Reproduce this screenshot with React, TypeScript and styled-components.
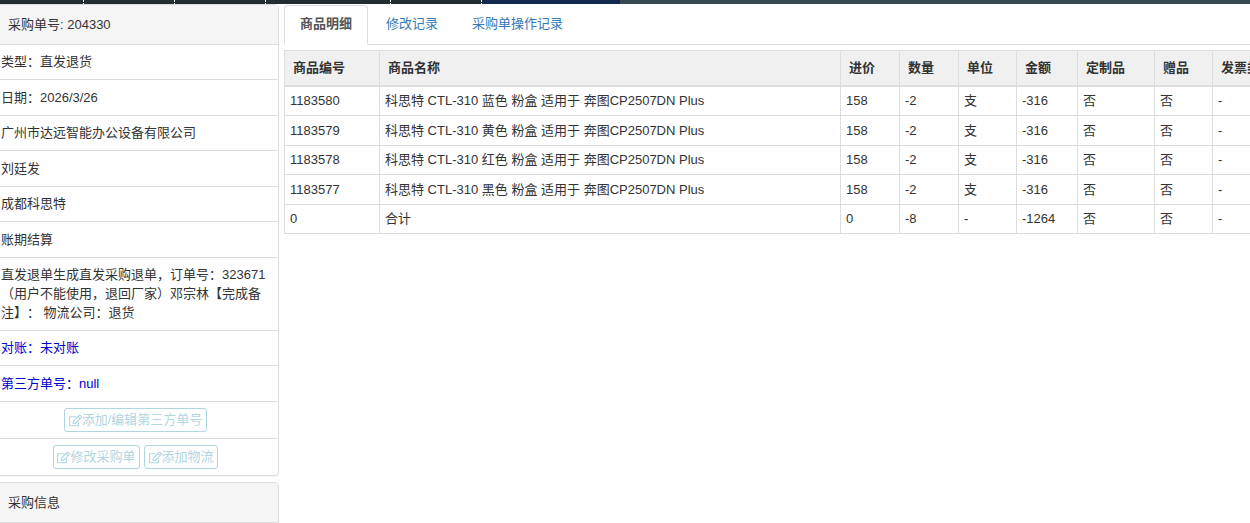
import React from 'react';
import styled, { createGlobalStyle } from 'styled-components';
import { FaRegEdit } from 'react-icons/fa';

const GlobalStyle = createGlobalStyle`
  html, body {
    margin: 0;
    padding: 0;
    height: 523px;
    overflow: hidden;
    background: #fff;
    font-family: "Liberation Sans", "Noto Sans CJK SC", sans-serif;
    font-size: 13px;
    line-height: 1.42857;
    color: #333;
    text-spacing-trim: space-all;
  }
`;

const TopBar = styled.div`
  display: flex;
  height: 4px;
  background: #374850;
`;
const BarPart = styled.div<{ $w: number; $bg: string }>`
  width: ${(p) => p.$w}px;
  background: ${(p) => p.$bg};
  border-right: 1px dotted #fff;
  box-sizing: border-box;
`;
const NavyPart = styled.div`
  width: 138px;
  background: #12294f;
`;

const Page = styled.div`
  display: flex;
  align-items: flex-start;
  margin-left: -8px;
`;

const Side = styled.div`
  width: 287px;
  flex: none;
`;
const Panel = styled.div`
  background: #fff;
  border: 1px solid #ddd;
  border-radius: 4px;
  box-shadow: 0 1px 1px rgba(0, 0, 0, 0.05);
  margin-bottom: 6px;
`;
const PanelHeading = styled.div`
  background: #f5f5f5;
  border-bottom: 1px solid #ddd;
  height: 38.5px;
  line-height: 39px;
  padding-left: 15px;
`;
const PanelBody = styled.div`
  height: 120px;
`;
const Row = styled.div<{ $blue?: boolean }>`
  padding: 8.5px 8px 7.5px;
  border-bottom: 1px solid #ddd;
  color: ${(p) => (p.$blue ? '#0000cd' : '#333')};
`;
const ButtonRow = styled.div`
  height: 37px;
  box-sizing: border-box;
  display: flex;
  justify-content: center;
  align-items: center;
  gap: 4px;
  border-bottom: 1px solid #ddd;
  &:last-child {
    height: 36.5px;
    border-bottom: 0;
  }
`;
const OutlineButton = styled.button`
  height: 24px;
  padding: 1px 3.5px 0;
  display: inline-flex;
  align-items: center;
  font: inherit;
  color: #6fb5c9;
  background: #fff;
  border: 1px solid #6fb5c9;
  border-radius: 3px;
  opacity: 0.55;
  svg {
    width: 13px;
    height: 13px;
    flex: none;
  }
`;

const Main = styled.div`
  flex: none;
  width: 1000px;
  margin-left: 5px;
  padding-top: 1px;
`;
const Tabs = styled.div`
  display: flex;
  height: 39px;
  border-bottom: 1px solid #ddd;
`;
const Tab = styled.div<{ $active?: boolean }>`
  box-sizing: border-box;
  padding: 0 15px;
  line-height: 36px;
  margin-right: 2px;
  color: ${(p) => (p.$active ? '#555' : '#337ab7')};
  font-weight: ${(p) => (p.$active ? 'bold' : 'normal')};
  background: #fff;
  border: 1px solid ${(p) => (p.$active ? '#ddd' : 'transparent')};
  border-bottom-color: ${(p) => (p.$active ? '#fff' : 'transparent')};
  border-radius: 4px 4px 0 0;
  height: ${(p) => (p.$active ? 40 : 39)}px;
`;
const GoodsTable = styled.table`
  margin-top: 5px;
  border-collapse: collapse;
  table-layout: fixed;
  width: 1020px;
`;
const HeadCell = styled.th`
  padding: 8px 8px 7px;
  text-align: left;
  font-weight: bold;
  background: #f0f0f0;
  border: 1px solid #ddd;
  border-bottom-width: 2px;
  white-space: nowrap;
  overflow: hidden;
`;
const Cell = styled.td`
  padding: 5.4px 5px 4.6px;
  border: 1px solid #ddd;
  white-space: nowrap;
`;

const columns: [string, number][] = [
  ['商品编号', 95],
  ['商品名称', 461],
  ['进价', 59],
  ['数量', 59],
  ['单位', 58],
  ['金额', 61],
  ['定制品', 77],
  ['赠品', 58],
  ['发票类型', 92],
];

const goods: string[][] = [
  ['1183580', '科思特 CTL-310 蓝色 粉盒 适用于 奔图CP2507DN Plus', '158', '-2', '支', '-316', '否', '否', '-'],
  ['1183579', '科思特 CTL-310 黄色 粉盒 适用于 奔图CP2507DN Plus', '158', '-2', '支', '-316', '否', '否', '-'],
  ['1183578', '科思特 CTL-310 红色 粉盒 适用于 奔图CP2507DN Plus', '158', '-2', '支', '-316', '否', '否', '-'],
  ['1183577', '科思特 CTL-310 黑色 粉盒 适用于 奔图CP2507DN Plus', '158', '-2', '支', '-316', '否', '否', '-'],
  ['0', '合计', '0', '-8', '-', '-1264', '否', '否', '-'],
];

const App = () => {
  return (
    <>
      <GlobalStyle />
      <TopBar>
        <BarPart $w={84} $bg="#222d32" />
        <BarPart $w={91} $bg="#222d32" />
        <BarPart $w={91} $bg="#222d32" />
        <BarPart $w={125} $bg="#222d32" />
        <BarPart $w={91} $bg="#222d32" />
        <NavyPart />
      </TopBar>
      <Page>
        <Side>
          <Panel>
            <PanelHeading>采购单号: 204330</PanelHeading>
            <Row>类型：直发退货</Row>
            <Row>日期：2026/3/26</Row>
            <Row>广州市达远智能办公设备有限公司</Row>
            <Row>刘廷发</Row>
            <Row>成都科思特</Row>
            <Row>账期结算</Row>
            <Row>
              直发退单生成直发采购退单，订单号：323671（用户不能使用，退回厂家）邓宗林【完成备注】： 物流公司：退货
            </Row>
            <Row $blue>对账：未对账</Row>
            <Row $blue>第三方单号：null</Row>
            <ButtonRow>
              <OutlineButton><FaRegEdit />添加/编辑第三方单号</OutlineButton>
            </ButtonRow>
            <ButtonRow>
              <OutlineButton><FaRegEdit />修改采购单</OutlineButton>
              <OutlineButton><FaRegEdit />添加物流</OutlineButton>
            </ButtonRow>
          </Panel>
          <Panel>
            <PanelHeading>采购信息</PanelHeading>
            <PanelBody />
          </Panel>
        </Side>
        <Main>
          <Tabs>
            <Tab $active>商品明细</Tab>
            <Tab>修改记录</Tab>
            <Tab>采购单操作记录</Tab>
          </Tabs>
          <GoodsTable>
            <colgroup>
              {columns.map(([name, width]) => (
                <col key={name} width={width} />
              ))}
            </colgroup>
            <thead>
              <tr>
                {columns.map(([name]) => (
                  <HeadCell key={name}>{name}</HeadCell>
                ))}
              </tr>
            </thead>
            <tbody>
              {goods.map((row) => (
                <tr key={row[0]}>
                  {row.map((value, i) => (
                    <Cell key={i}>{value}</Cell>
                  ))}
                </tr>
              ))}
            </tbody>
          </GoodsTable>
        </Main>
      </Page>
    </>
  );
};

export default App;
